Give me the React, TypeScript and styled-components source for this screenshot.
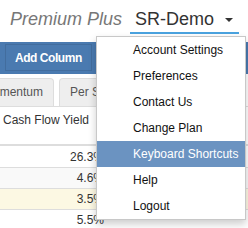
import React from "react";
import styled, { createGlobalStyle } from "styled-components";

const Global = createGlobalStyle`
  html, body { margin: 0; padding: 0; background: #fff; }
  body { font-family: "Liberation Sans", Arial, sans-serif; color: #333; }
  * { box-sizing: border-box; }
`;

const Page = styled.div`
  position: relative;
  width: 248px;
  height: 228px;
  overflow: hidden;
  background: #fff;
`;

const TopBar = styled.header`
  height: 42px;
  display: flex;
  justify-content: flex-end;
  align-items: flex-start;
  padding: 9px 9px 0 0;
`;

const Plan = styled.span`
  font-size: 18px;
  line-height: 20px;
  font-style: italic;
  color: #777;
  margin-right: 8px;
`;

const UserToggle = styled.div`
  display: flex;
  align-items: center;
  font-size: 18px;
  line-height: 20px;
  color: #333;
  padding: 0 6px 3px 5px;
  border-bottom: 2px solid #4aa3df;
`;

const Caret = styled.span`
  display: inline-block;
  width: 0;
  height: 0;
  margin-left: 11px;
  margin-top: 1px;
  border-top: 4px solid #333;
  border-left: 4px solid transparent;
  border-right: 4px solid transparent;
`;

const Toolbar = styled.div`
  height: 32px;
  background: #4a7ab0;
  padding: 2px 5px;
  display: flex;
  align-items: flex-start;
`;

const ToolButton = styled.button`
  height: 27px;
  padding: 0 9px;
  border: 1px solid rgba(0, 0, 0, 0.1);
  background: #4a7ab0;
  color: #fff;
  font-family: "Liberation Sans", Arial, sans-serif;
  font-weight: bold;
  font-size: 12px;
  letter-spacing: -0.45px;
  border-radius: 0;
`;

const TabBar = styled.div`
  height: 33px;
  display: flex;
  align-items: flex-end;
  border-bottom: 1px solid #ddd;
  overflow: hidden;
`;

const Tab = styled.div<{ $offset?: number }>`
  flex: none;
  height: 28px;
  margin-left: ${(p) => p.$offset ?? 0}px;
  margin-right: 5px;
  padding: 0 10px;
  border: 1px solid #ddd;
  border-bottom: none;
  border-radius: 4px 4px 0 0;
  background: #eee;
  font-size: 12px;
  line-height: 27px;
  color: #555;
  white-space: nowrap;
`;

const Table = styled.div`
  display: grid;
  grid-template-columns: 108px 1fr;
`;

const HeadCell = styled.div`
  height: 39px;
  padding: 5px 3px 0;
  font-size: 12px;
  line-height: 17px;
  color: #333;
  border-bottom: 2px solid #ddd;
  white-space: nowrap;
`;

const Cell = styled.div<{ $bg: string; $first?: boolean }>`
  height: 21px;
  padding: 0 4px;
  text-align: right;
  font-size: 12px;
  line-height: ${(p) => (p.$first ? 22 : 21)}px;
  color: #333;
  background: ${(p) => p.$bg};
  border-top: ${(p) => (p.$first ? "none" : "1px solid #ddd")};
`;

const Menu = styled.ul`
  position: absolute;
  top: 36px;
  left: 96px;
  width: 150px;
  margin: 0;
  padding: 0;
  list-style: none;
  background: #fff;
  border: 1px solid #c8c8c8;
  box-shadow: 0 4px 8px rgba(0, 0, 0, 0.2);
  z-index: 10;
`;

const MenuItem = styled.li<{ $active?: boolean }>`
  height: 26px;
  padding-left: 36px;
  font-size: 12px;
  line-height: 26px;
  color: ${(p) => (p.$active ? "#fff" : "#111")};
  background: ${(p) => (p.$active ? "#6b93c1" : "transparent")};
  white-space: nowrap;
`;

const rows = [
  { v: "26.3%", bg: "#fff" },
  { v: "4.6%", bg: "#f9f9f9" },
  { v: "3.5%", bg: "#fcf8e3" },
  { v: "5.5%", bg: "#fff" },
];

const items = [
  "Account Settings",
  "Preferences",
  "Contact Us",
  "Change Plan",
  "Keyboard Shortcuts",
  "Help",
  "Logout",
];

export default function App() {
  return (
    <Page>
      <Global />
      <TopBar>
        <Plan>Premium Plus</Plan>
        <UserToggle>
          SR-Demo
          <Caret />
        </UserToggle>
      </TopBar>
      <Toolbar>
        <ToolButton>Add Column</ToolButton>
      </Toolbar>
      <TabBar>
        <Tab $offset={-28}>Momentum</Tab>
        <Tab>Per Share</Tab>
        <Tab>Valuation</Tab>
      </TabBar>
      <Table>
        <HeadCell>Cash Flow Yield</HeadCell>
        <HeadCell />
        {rows.map((r, i) => (
          <React.Fragment key={i}>
            <Cell $bg={r.bg} $first={i === 0}>{r.v}</Cell>
            <Cell $bg={r.bg} $first={i === 0} />
          </React.Fragment>
        ))}
      </Table>
      <Menu>
        {items.map((t) => (
          <MenuItem key={t} $active={t === "Keyboard Shortcuts"}>
            {t}
          </MenuItem>
        ))}
      </Menu>
    </Page>
  );
}
